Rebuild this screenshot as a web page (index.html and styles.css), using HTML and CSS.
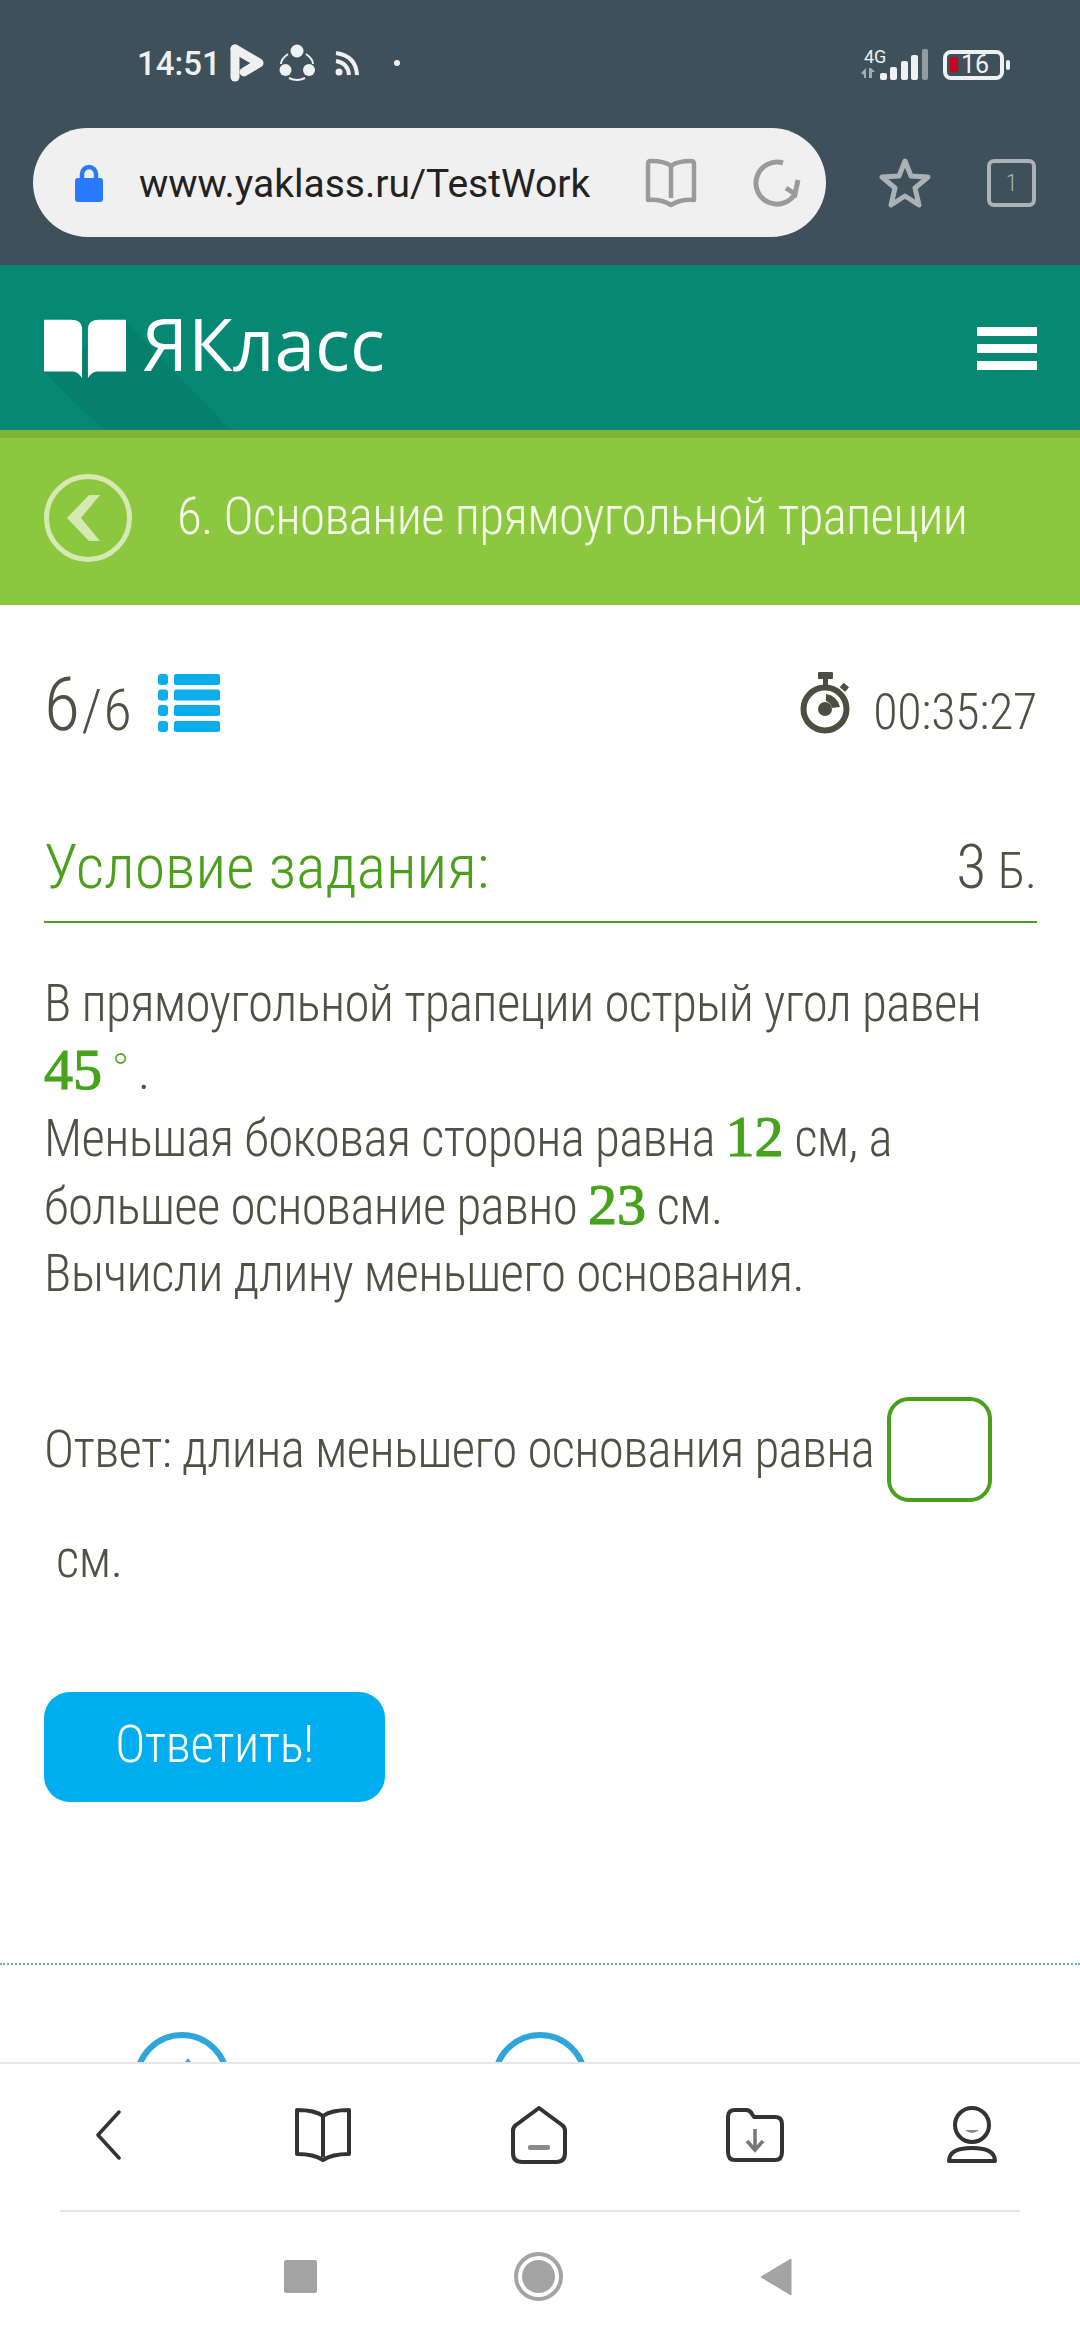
FILE: index.html
```html
<!DOCTYPE html>
<html lang="ru">
<head>
    <meta charset="UTF-8">
    <title>ЯКласс</title>
    <link rel="stylesheet" href="styles.css">
</head>
<body>
<div class="page">
    <!-- Шапка браузера -->
    <div class="browser">
        <div class="status">
            <span class="clock">14:51</span>
            <svg class="st-play" width="36" height="38" viewBox="0 0 36 38"><path d="M6 5 V33" stroke="#eef0f1" stroke-width="9" stroke-linecap="round"/><path d="M6 5 L30 19 L15 28" fill="none" stroke="#eef0f1" stroke-width="9" stroke-linecap="round" stroke-linejoin="round"/><path d="M11 15 L21 19 L11 25Z" fill="#3e5059"/></svg>
            <svg class="st-share" width="36" height="38" viewBox="0 0 36 38"><g fill="#eef0f1"><circle cx="18" cy="7" r="6.500"/><circle cx="6.500" cy="26" r="6"/><circle cx="30" cy="26" r="6"/></g><g fill="none" stroke="#eef0f1" stroke-width="2"><path d="M9 10 Q2 15 2 20"/><path d="M27 10 Q34 15 34 20"/><path d="M10 34 Q18 38 26 34"/></g></svg>
            <svg class="st-rss" width="24" height="26" viewBox="0 0 24 26"><g fill="none" stroke="#eef0f1" stroke-width="4"><path d="M1 3 Q21 6 22 25"/><path d="M1 11 Q13 13 14 25"/></g><circle cx="4" cy="22" r="3.500" fill="#eef0f1"/></svg>
            <span class="st-dot"></span>
            <span class="st-space"></span>
            <div class="net">
                <span class="net-4g">4G</span>
                <svg width="16" height="12" viewBox="0 0 16 12"><path d="M0 6 L5 1 V11 H3 V8Z M8 11 V1 H10 L14 5 H11 V11Z" fill="#a3adb1"/></svg>
            </div>
            <svg class="st-bars" width="49" height="31" viewBox="0 0 49 31"><g fill="#eef0f1"><rect x="0" y="24" width="7" height="7" rx="2"/><rect x="10" y="18" width="7" height="13" rx="2"/><rect x="21" y="12" width="7" height="19" rx="2"/><rect x="31" y="6" width="7" height="25" rx="2"/></g><rect x="42" y="0" width="6" height="31" rx="2" fill="#8f9da2"/></svg>
            <div class="battery"><span class="battery-low"></span><span class="battery-num">16</span></div>
            <span class="battery-nub"></span>
        </div>
        <div class="urlbar">
            <div class="pill">
                <svg class="lock" width="30" height="38" viewBox="0 0 30 38"><path d="M8 17 V10 a7 7 0 0 1 14 0 V17" fill="none" stroke="#2979ff" stroke-width="4.500"/><rect x="1" y="14" width="28" height="24" rx="3" fill="#2979ff"/></svg>
                <span class="url">www.yaklass.ru/TestWork</span>
                <svg class="pill-book" width="52" height="50" viewBox="0 0 52 50"><path d="M26 8 Q20 3 6 3 Q3 3 3 6 V42 Q16 41 26 47 Q36 41 49 42 V6 Q49 3 46 3 Q32 3 26 8 Z M26 8 V40" fill="none" stroke="#9a9a9a" stroke-width="4.500" stroke-linejoin="round"/></svg>
                <svg class="pill-reload" width="48" height="50" viewBox="0 0 48 50"><path d="M30 5 A21 21 0 1 0 43 34 M45 22 L42 36 L33 30" fill="none" stroke="#9a9a9a" stroke-width="5"/></svg>
            </div>
            <svg class="star" width="52" height="50" viewBox="0 0 52 50"><path d="M26 3 L32 18 L49 19 L36 30 L40 47 L26 38 L12 47 L16 30 L3 19 L20 18 Z" fill="none" stroke="#aab2b6" stroke-width="5" stroke-linejoin="round"/></svg>
            <div class="tabs">1</div>
        </div>
    </div>

    <!-- Шапка сайта -->
    <div class="site-head">
        <div class="logo">
            <svg class="logo-book" width="82" height="60" viewBox="0 0 84 60"><polygon class="logo-shadow" points="0,54 60,112 190,112 82,0"/><path d="M0 0 H28 Q38 0 39 8 V60 Q36 54 30 53 H0 Z M84 0 H56 Q46 0 45 8 V60 Q48 54 54 53 H84 Z" fill="#fff"/></svg>
            <span class="logo-text">ЯКласс</span>
        </div>
        <div class="burger"><span></span><span></span><span></span></div>
    </div>

    <div class="topic">
        <div class="back"><svg width="34" height="46" viewBox="0 0 34 46"><polygon points="22,0 33,0 14,23 33,46 22,46 0,23" fill="#d5e9b4"/></svg></div>
        <span class="topic-title">6. Основание прямоугольной трапеции</span>
    </div>

    <!-- Задание -->
    <div class="content">
        <div class="progress">
            <div class="count"><b>6</b>/6</div>
            <svg class="list-icon" width="62" height="58" viewBox="0 0 62 58"><g fill="#0baeea"><rect x="0" y="0" width="10" height="11" rx="3"/><rect x="16" y="0" width="46" height="11" rx="2"/><rect x="0" y="15.500" width="10" height="11" rx="3"/><rect x="16" y="15.500" width="46" height="11" rx="2"/><rect x="0" y="31" width="10" height="11" rx="3"/><rect x="16" y="31" width="46" height="11" rx="2"/><rect x="0" y="47" width="10" height="11" rx="3"/><rect x="16" y="47" width="46" height="11" rx="2"/></g></svg>
            <span class="grow"></span>
            <svg class="watch" width="52" height="62" viewBox="0 0 52 62"><g fill="#4c4e3f"><rect x="18" y="0" width="15" height="7" rx="1"/><rect x="23" y="7" width="5" height="6"/><rect x="41" y="12" width="7" height="6" transform="rotate(40 44 15)"/><circle cx="25" cy="37" r="7"/><path d="M26 22 A16 16 0 0 1 40 35 L32 36 Q31 31 26 29Z"/></g><circle cx="25" cy="37" r="21.500" fill="none" stroke="#4c4e3f" stroke-width="6"/></svg>
            <span class="timer">00:35:27</span>
        </div>

        <div class="task-head">
            <span class="task-title">Условие задания:</span>
            <span class="task-points"><b>3</b> Б.</span>
        </div>

        <div class="task-text">
            В прямоугольной трапеции острый угол равен<br>
            <span class="num">45</span><sup class="deg">∘</sup>.<br>
            Меньшая боковая сторона равна <span class="num">12</span> см, а<br>
            большее основание равно <span class="num">23</span> см.<br>
            Вычисли длину меньшего основания.
        </div>

        <div class="answer">
            <span>Ответ: длина меньшего основания равна</span>
            <span class="answer-box"></span>
        </div>
        <div class="unit">см.</div>

        <div class="send">Ответить!</div>

        <div class="dots"></div>

        <div class="circles">
            <div class="circle"><span class="circle-arrow"></span></div>
            <div class="circle"></div>
        </div>
    </div>

    <!-- Нижняя панель браузера -->
    <div class="bottom">
        <div class="tools">
            <svg width="26" height="50" viewBox="0 0 26 50"><path d="M24 2 L3 25 L24 48" fill="none" stroke="#333" stroke-width="3.500" stroke-linecap="round" stroke-linejoin="round"/></svg>
            <svg width="58" height="56" viewBox="0 0 58 56"><path d="M29 9 Q21 3 3 3 V47 Q20 47 29 53 Q38 47 55 47 V3 Q37 3 29 9 Z M29 9 V50" fill="none" stroke="#333" stroke-width="4" stroke-linejoin="round"/></svg>
            <svg width="58" height="58" viewBox="0 0 58 58"><path d="M29 2 L52 19 Q55 21 55 25 V47 Q55 56 46 56 H12 Q3 56 3 47 V25 Q3 21 6 19 Z" fill="none" stroke="#333" stroke-width="4" stroke-linejoin="round"/><rect x="18" y="39" width="22" height="5" rx="2" fill="#8a8a8a"/></svg>
            <svg width="60" height="56" viewBox="0 0 60 56"><path d="M3 10 Q3 3 10 3 H21 Q25 3 27 7 L29 10 H50 Q57 10 57 17 V45 Q57 53 50 53 H10 Q3 53 3 45 Z" fill="none" stroke="#333" stroke-width="4" stroke-linejoin="round"/><path d="M30 22 V42 M22 34 L30 43 L38 34" fill="none" stroke="#777" stroke-width="3.500"/></svg>
            <svg width="52" height="58" viewBox="0 0 52 58"><ellipse cx="26" cy="19" rx="17" ry="17" fill="none" stroke="#333" stroke-width="4"/><path d="M19 24 Q26 30 33 24 Z" fill="#8a8a8a"/><path d="M3 55 Q3 42 26 42 Q49 42 49 55 Z" fill="none" stroke="#333" stroke-width="4" stroke-linejoin="round"/></svg>
        </div>
        <div class="bottom-line"></div>
        <div class="sysnav">
            <span class="sys-square"></span>
            <span class="sys-circle"><span></span></span>
            <svg width="32" height="38" viewBox="0 0 32 38"><path d="M31 1 V37 L1 19 Z" fill="#a3a3a3" stroke="#a3a3a3" stroke-linejoin="round"/></svg>
        </div>
    </div>
</div>
</body>
</html>
```

FILE: styles.css
```css
* {
    box-sizing: border-box;
}
body {
    margin: 0;
    font-family: Roboto, "Noto Sans", sans-serif;
    font-weight: 300;
    font-stretch: 80%;
    color: #4f5145;
    background-color: #fff;
}
.page {
    width: 1080px;
    height: 2340px;
    display: flex;
    flex-direction: column;
    overflow: hidden;
}
.browser {
    height: 265px;
    background-color: #3e5059;
    padding-top: 44px;
}
.status {
    height: 38px;
    display: flex;
    align-items: center;
    padding-left: 137px;
    font-stretch: 100%;
}
.clock {
    font-size: 33px;
    font-weight: 500;
    color: #eef0f1;
    width: 92px;
}
.st-share {
    margin-left: 14px;
}
.st-rss {
    margin-left: 20px;
}
.st-dot {
    width: 6px;
    height: 6px;
    border-radius: 50%;
    background-color: #eef0f1;
    margin-left: 35px;
}
.st-space {
    flex: 1;
}
.net {
    width: 19px;
    display: flex;
    flex-direction: column;
    font-size: 16px;
}
.net-4g {
    font-size: 18px;
    font-weight: 400;
    line-height: 20px;
    margin-left: 3px;
    color: #eef0f1;
    white-space: nowrap;
}
.st-bars {
    margin: 3px 0 0 0;
}
.battery {
    width: 61px;
    height: 30px;
    margin: 3px 0 0 14px;
    border: 4px solid #eef0f1;
    border-radius: 8px;
    display: flex;
    align-items: center;
    padding-left: 3px;
}
.battery-low {
    width: 8px;
    height: 15px;
    border-radius: 2px;
    background-color: #d0021b;
}
.battery-num {
    font-size: 25px;
    font-weight: 400;
    color: #eef0f1;
    margin-left: 3px;
}
.battery-nub {
    width: 4px;
    height: 10px;
    margin: 3px 70px 0 2px;
    border-radius: 2px;
    background-color: #eef0f1;
}
.urlbar {
    display: flex;
    align-items: center;
    padding: 46px 0 0 33px;
}
.pill {
    width: 793px;
    height: 109px;
    border-radius: 55px;
    background-color: #f0f0f0;
    display: flex;
    align-items: center;
    padding-left: 41px;
}
.url {
    font-size: 39px;
    font-weight: 400;
    font-stretch: 100%;
    color: #222;
    margin: 2px 0 0 35px;
    width: 506px;
}
.pill-reload {
    margin-left: 56px;
}
.star {
    margin-left: 53px;
}
.tabs {
    width: 49px;
    height: 48px;
    margin-left: 56px;
    border: 4px solid #aab2b6;
    border-radius: 7px;
    color: #aab2b6;
    font-size: 24px;
    text-align: center;
    line-height: 40px;
}
.site-head {
    height: 165px;
    background-color: #078872;
    display: flex;
    justify-content: space-between;
    padding: 54px 43px 0 44px;
    overflow: hidden;
}
.logo {
    display: flex;
    align-items: flex-start;
}
.logo-book {
    overflow: visible;
}
.logo-shadow {
    fill: rgba(0, 0, 0, 0.06);
}
.logo-text {
    font-family: "Open Sans", sans-serif;
    font-weight: 400;
    font-stretch: 100%;
    font-size: 73px;
    line-height: 48px;
    color: #fff;
    margin-left: 16px;
}
.burger {
    width: 60px;
    display: flex;
    flex-direction: column;
    gap: 8px;
    margin-top: 8px;
}
.burger span {
    height: 9px;
    background-color: #fff;
}
.topic {
    height: 175px;
    background-color: #8cc83f;
    border-top: 8px solid #7fb239;
    padding: 0 0 8px 44px;
    display: flex;
    align-items: center;
}
.back {
    width: 88px;
    height: 88px;
    border: 5px solid #d5e9b4;
    border-radius: 50%;
    display: flex;
    align-items: center;
    justify-content: center;
    padding-right: 8px;
}
.topic-title {
    font-size: 51px;
    letter-spacing: -0.65px;
    color: #f6fbea;
    margin: 0 0 2px 45px;
}
.content {
    flex: 1;
    overflow: hidden;
    padding: 67px 43px 0 44px;
}
.progress {
    display: flex;
    align-items: flex-end;
    height: 62px;
}
.count {
    font-size: 58px;
    letter-spacing: 1.500px;
    line-height: 58px;
    width: 114px;
    margin-bottom: -5px;
}
.count b {
    font-weight: 300;
    font-size: 74px;
}
.list-icon {
    margin-bottom: 2px;
}
.grow {
    flex: 1;
}
.timer {
    font-size: 50px;
    letter-spacing: -0.3px;
    line-height: 56px;
    margin: 0 0 -6px 21px;
}
.task-head {
    display: flex;
    justify-content: space-between;
    align-items: baseline;
    height: 93px;
    margin-top: 96px;
    border-bottom: 2px solid #4aa01a;
}
.task-title {
    font-size: 62px;
    line-height: 70px;
    color: #4aa01a;
}
.task-points {
    font-size: 50px;
}
.task-points b {
    font-weight: 300;
    font-size: 62px;
}
.task-text {
    margin-top: 47px;
    font-size: 51px;
    letter-spacing: -0.67px;
    line-height: 67.500px;
}
.num {
    font-family: "Liberation Serif", serif;
    font-weight: 400;
    font-stretch: 100%;
    font-size: 58px;
    letter-spacing: 0;
    color: #46a31c;
    line-height: 0;
    -webkit-text-stroke: 1.200px #46a31c;
}
.deg {
    font-family: "DejaVu Sans", sans-serif;
    font-size: 40px;
    letter-spacing: 0;
    line-height: 0;
    color: #46a31c;
    margin: 0 5px 0 6px;
}
.answer {
    display: flex;
    align-items: center;
    margin-top: 89px;
    font-size: 51px;
    letter-spacing: -0.67px;
}
.answer-box {
    width: 105px;
    height: 105px;
    margin-left: 13px;
    border: 4px solid #4aa01a;
    border-radius: 22px;
}
.unit {
    font-size: 51px;
    letter-spacing: -0.43px;
    line-height: 54px;
    margin: 31px 0 0 12px;
}
.send {
    width: 341px;
    height: 110px;
    margin-top: 105px;
    border-radius: 26px;
    background-color: #00aeef;
    color: #fff;
    font-size: 51px;
    letter-spacing: -0.43px;
    line-height: 106px;
    text-align: center;
}
.dots {
    height: 2px;
    margin: 161px -43px 0 -44px;
    border-top: 2px dotted #6fb0b8;
}
.circles {
    display: flex;
    gap: 262px;
    margin: 67px 0 0 90px;
}
.circle {
    width: 96px;
    height: 96px;
    border: 6px solid #2ea6da;
    border-radius: 50%;
    display: flex;
    justify-content: center;
}
.circle-arrow {
    width: 0;
    height: 0;
    margin: 20px 0 0 12px;
    border-left: 6px solid transparent;
    border-right: 6px solid transparent;
    border-bottom: 8px solid #4f9fc5;
}
.bottom {
    height: 278px;
    background-color: #fff;
    border-top: 2px solid #e6e6e6;
}
.tools {
    height: 146px;
    padding-bottom: 5px;
    display: grid;
    grid-template-columns: 215px 216px 216px 216px 217px;
    justify-items: center;
    align-items: center;
}
.bottom-line {
    height: 2px;
    margin: 0 60px;
    background-color: #e6e6e6;
}
.sysnav {
    display: flex;
    justify-content: space-between;
    align-items: center;
    padding: 40px 288px 0 284px;
}
.sys-square {
    width: 33px;
    height: 33px;
    border-radius: 2px;
    background-color: #a3a3a3;
}
.sys-circle {
    width: 49px;
    height: 49px;
    border: 4px solid #a3a3a3;
    border-radius: 50%;
    display: flex;
    align-items: center;
    justify-content: center;
}
.sys-circle span {
    width: 33px;
    height: 33px;
    border-radius: 50%;
    background-color: #a3a3a3;
}
```
